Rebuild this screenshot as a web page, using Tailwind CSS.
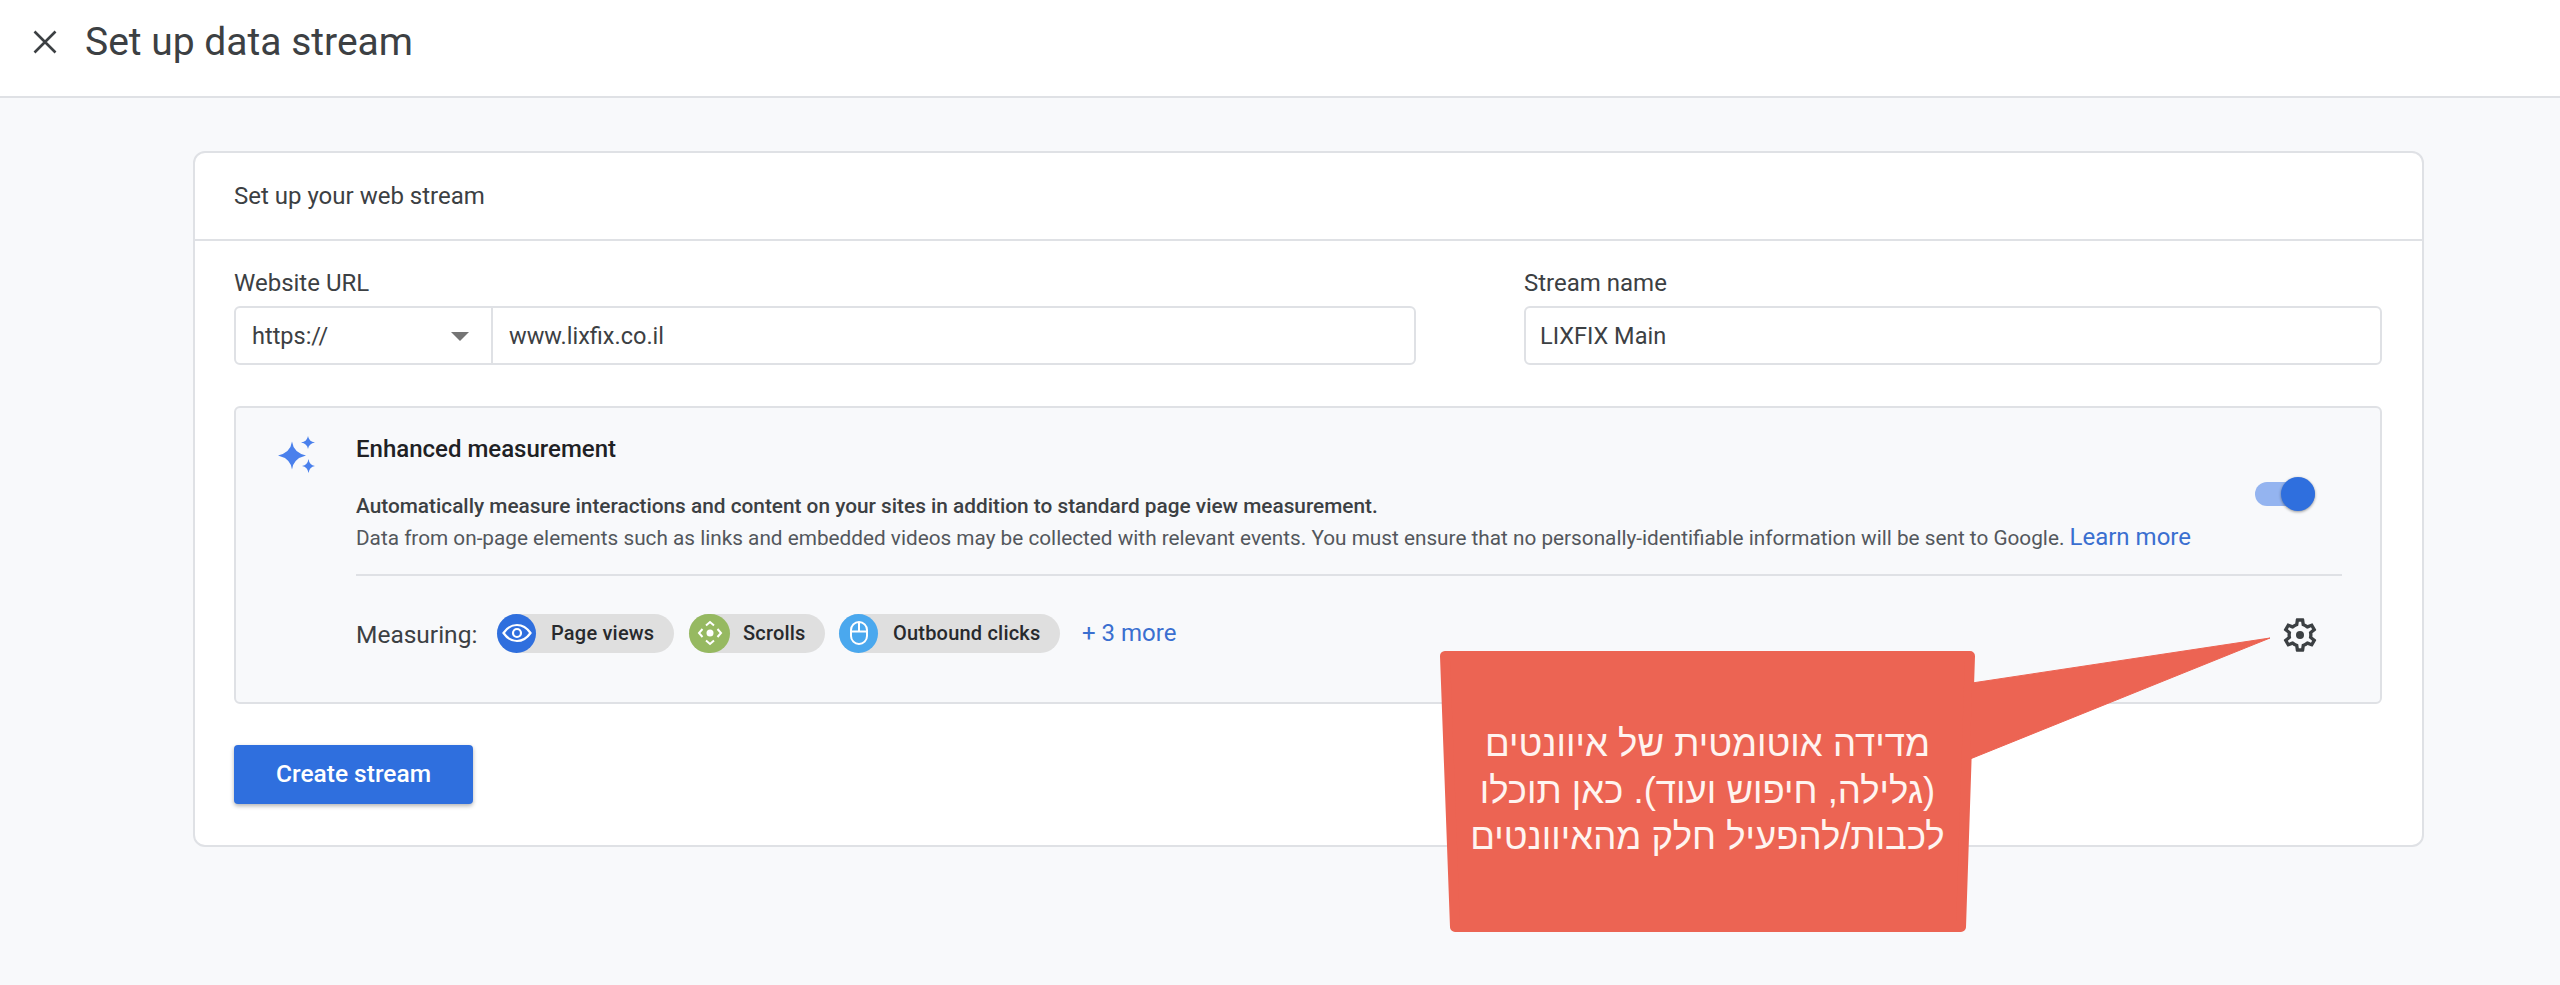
<!DOCTYPE html>
<html lang="en">
<head>
  <meta charset="UTF-8" />
  <title>Set up data stream</title>
  <script src="https://cdn.jsdelivr.net/npm/@tailwindcss/browser@4"></script>
</head>
<body class="relative h-[985px] w-[2560px] overflow-hidden bg-[#f8f9fb] font-['Roboto',sans-serif] text-[#3c4043]">
  <!-- top bar -->
  <header class="flex h-[98px] items-center border-b-2 border-[#dfe1e5] bg-white pb-[12px] pl-[33px]">
    <svg class="h-[24px] w-[24px]" viewBox="0 0 24 24" fill="none" stroke="#3c4043" stroke-width="2.6"><path d="M1.500 1.500 22.500 22.500M22.500 1.500 1.500 22.500" /></svg>
    <h1 class="ml-[28px] text-[39px] leading-none text-[#3c4043]">Set up data stream</h1>
  </header>

  <main class="ml-[193px] mt-[53px] h-[696px] w-[2231px] rounded-[12px] border-2 border-[#dfe1e5] bg-white">
    <div class="flex h-[88px] items-center border-b-2 border-[#dfe1e5] pl-[39px] text-[24px] text-[#3c4043]">Set up your web stream</div>

    <div class="pl-[39px] pr-[40px]">
      <div class="mt-[25px] flex justify-between">
        <div class="w-[1182px]">
          <label class="block h-[40px] text-[24px] leading-[34px]">Website URL</label>
          <div class="flex h-[59px] rounded-[6px] border-2 border-[#dfe1e5] bg-white text-[23.500px]">
            <div class="flex w-[257px] items-center justify-between border-r-2 border-[#dfe1e5] pl-[16px] pr-[22px] pt-[2px]">
              <span>https://</span>
              <span class="h-0 w-0 border-x-[9px] border-t-[9px] border-x-transparent border-t-[#757575]"></span>
            </div>
            <div class="flex flex-1 items-center pl-[16px] pt-[2px]">www.lixfix.co.il</div>
          </div>
        </div>
        <div class="w-[858px]">
          <label class="block h-[40px] text-[24px] leading-[34px]">Stream name</label>
          <div class="flex h-[59px] items-center rounded-[6px] border-2 border-[#dfe1e5] bg-white pl-[14px] pt-[2px] text-[23.500px]">LIXFIX Main</div>
        </div>
      </div>

      <section class="mt-[41px] flex h-[298px] rounded-[6px] border-2 border-[#dfe1e5] bg-[#f8f9fb]">
        <svg class="ml-[41px] mt-[28px] h-[38px] w-[38px] shrink-0" viewBox="0 0 38 38" fill="#4a80ec">
          <path d="M15 5.500 Q16.500 16.500 29 19.500 Q16.500 22.500 15 33.500 Q13.500 22.500 1 19.500 Q13.500 16.500 15 5.500Z" />
          <path d="M31 0 Q31.800 5.500 38 6.500 Q31.800 7.500 31 13 Q30.200 7.500 24 6.500 Q30.200 5.500 31 0Z" />
          <path d="M31.500 23 Q32.300 29 38 30 Q32.300 31 31.500 37 Q30.700 31 25 30 Q30.700 29 31.500 23Z" />
        </svg>
        <div class="ml-[41px] mr-[38px] flex-1">
          <div class="flex h-[168px] items-center justify-between border-b-2 border-[#dfe1e5] pt-[5px]">
            <div>
              <h2 class="text-[24px] font-medium leading-[30px] text-[#202124]">Enhanced measurement</h2>
              <p class="mt-[27px] text-[20.800px] font-medium leading-[31px] text-[#3c4043]">Automatically measure interactions and content on your sites in addition to standard page view measurement.</p>
              <p class="text-[20.750px] leading-[31px] text-[#53575c]">Data from on-page elements such as links and embedded videos may be collected with relevant events. You must ensure that no personally-identifiable information will be sent to Google. <a class="text-[24px] text-[#3a6fd0]">Learn more</a></p>
            </div>
            <div class="relative mr-[27px] h-[24px] w-[60px] rounded-full bg-[#94b4f0]">
              <span class="absolute right-0 top-[-5px] h-[34px] w-[34px] rounded-full bg-[#2f6fde] shadow-[0_1px_3px_rgba(0,0,0,0.4)]"></span>
            </div>
          </div>
          <div class="mt-[39px] flex items-center">
            <span class="w-[141px] text-[24.500px] leading-none">Measuring:</span>
            <div class="flex h-[39px] w-[177px] -translate-y-[2px] items-center rounded-full bg-[#dfdfdf] text-[20px] font-medium tracking-[0.2px] text-[#282a2d]">
              <span class="flex h-[39px] w-[39px] items-center justify-center rounded-full bg-[#2f6fde]">
                <svg class="h-[30px] w-[30px]" viewBox="0 0 30 30" fill="none" stroke="#fff" stroke-width="2.200"><path d="M1.500 15 C6 8.500 10.500 7 15 7 C19.500 7 24 8.500 28.500 15 C24 21.500 19.500 23 15 23 C10.500 23 6 21.500 1.500 15Z" /><circle cx="15" cy="15" r="4" /></svg>
              </span>
              <span class="ml-[15px]">Page views</span>
            </div>
            <div class="ml-[15px] flex h-[39px] w-[136px] -translate-y-[2px] items-center rounded-full bg-[#dfdfdf] text-[20px] font-medium tracking-[0.2px] text-[#282a2d]">
              <span class="flex h-[39px] w-[41px] items-center justify-center rounded-full bg-[#96b961]">
                <svg class="h-[26px] w-[26px]" viewBox="0 0 26 26" fill="none" stroke="#fff" stroke-width="2"><path d="M9 5.500 13 2 17 5.500M9 20.500 13 24 17 20.500M5.500 9 2 13 5.500 17M20.500 9 24 13 20.500 17" /><circle cx="13" cy="13" r="3.500" fill="#fff" stroke="none" /></svg>
              </span>
              <span class="ml-[13px]">Scrolls</span>
            </div>
            <div class="ml-[14px] flex h-[39px] w-[221px] -translate-y-[2px] items-center rounded-full bg-[#dfdfdf] text-[20px] font-medium tracking-[0.2px] text-[#282a2d]">
              <span class="flex h-[39px] w-[39px] items-center justify-center rounded-full bg-[#4aa8ee]">
                <svg class="h-[26px] w-[26px]" viewBox="0 0 26 26" fill="none" stroke="#fff" stroke-width="2"><rect x="5" y="2" width="16" height="22" rx="8" /><path d="M5 11.500H21M13 2V11.500" /></svg>
              </span>
              <span class="ml-[15px]">Outbound clicks</span>
            </div>
            <a class="ml-[22px] -translate-y-[2px] text-[24px] text-[#3a6fd0]">+ 3 more</a>
            <svg class="ml-auto mr-[22px] h-[40px] w-[40px]" viewBox="0 0 24 24" fill="#3c4043"><path d="M19.430 12.980c.04-.32.07-.64.07-.98 0-.34-.03-.66-.07-.98l2.110-1.650c.19-.15.24-.42.12-.64l-2-3.460c-.09-.16-.26-.25-.44-.25-.06 0-.12.01-.17.03l-2.490 1c-.52-.4-1.080-.73-1.690-.98l-.38-2.650C14.460 2.180 14.250 2 14 2h-4c-.25 0-.46.18-.49.42l-.38 2.650c-.61.25-1.170.59-1.690.98l-2.490-1c-.06-.02-.12-.03-.18-.03-.17 0-.34.09-.43.25l-2 3.460c-.13.22-.07.49.12.64l2.110 1.650c-.04.32-.07.65-.07.98 0 .33.03.66.07.98l-2.110 1.650c-.19.15-.24.42-.12.64l2 3.460c.09.16.26.25.44.25.06 0 .12-.01.17-.03l2.490-1c.52.4 1.080.73 1.690.98l.38 2.650c.03.24.24.42.49.42h4c.25 0 .46-.18.49-.42l.38-2.650c.61-.25 1.170-.59 1.690-.98l2.490 1c.06.02.12.03.18.03.17 0 .34-.09.43-.25l2-3.460c.12-.22.07-.49-.12-.64l-2.110-1.650zm-1.980-1.710c.04.31.05.52.05.73 0 .21-.02.43-.05.73l-.14 1.130.89.7 1.080.84-.7 1.210-1.270-.51-1.040-.42-.9.68c-.43.32-.84.56-1.250.73l-1.060.43-.16 1.130-.2 1.350h-1.400l-.19-1.350-.16-1.130-1.060-.43c-.43-.18-.83-.41-1.230-.71l-.91-.7-1.060.43-1.270.51-.7-1.210 1.080-.84.89-.7-.14-1.130c-.03-.31-.05-.54-.05-.74s.02-.43.05-.73l.14-1.130-.89-.7-1.080-.84.7-1.210 1.270.51 1.040.42.9-.68c.43-.32.84-.56 1.250-.73l1.060-.43.16-1.130.2-1.350h1.390l.19 1.350.16 1.130 1.060.43c.43.18.83.41 1.230.71l.91.7 1.060-.43 1.270-.51.7 1.210-1.070.85-.89.7.14 1.130z" /><circle cx="12" cy="12" r="2.400" /></svg>
          </div>
        </div>
      </section>

      <button class="mt-[41px] h-[59px] w-[239px] rounded-[4px] bg-[#2f6fde] text-[24.500px] font-medium text-white shadow-[0_2px_4px_rgba(0,0,0,0.3)]">Create stream</button>
    </div>
  </main>

  <!-- annotation callout over the page -->
  <svg class="absolute left-0 top-0" width="2560" height="985" fill="#ec6453" stroke="#ec6453" stroke-linejoin="round">
    <path d="M1445 656H1970L1961 927H1455Z" stroke-width="10" />
    <path d="M1972 683L2270 638L1970 759Z" stroke-width="1" />
  </svg>
  <div dir="rtl" class="absolute left-[1440px] top-[721px] w-[535px] text-center font-['Liberation_Sans','Noto_Sans',sans-serif] text-[36.500px] leading-[46.500px] text-[#fff4f0]">
    מדידה אוטומטית של איוונטים<br />(גלילה, חיפוש ועוד). כאן תוכלו<br />לכבות/להפעיל חלק מהאיוונטים
  </div>
</body>
</html>
